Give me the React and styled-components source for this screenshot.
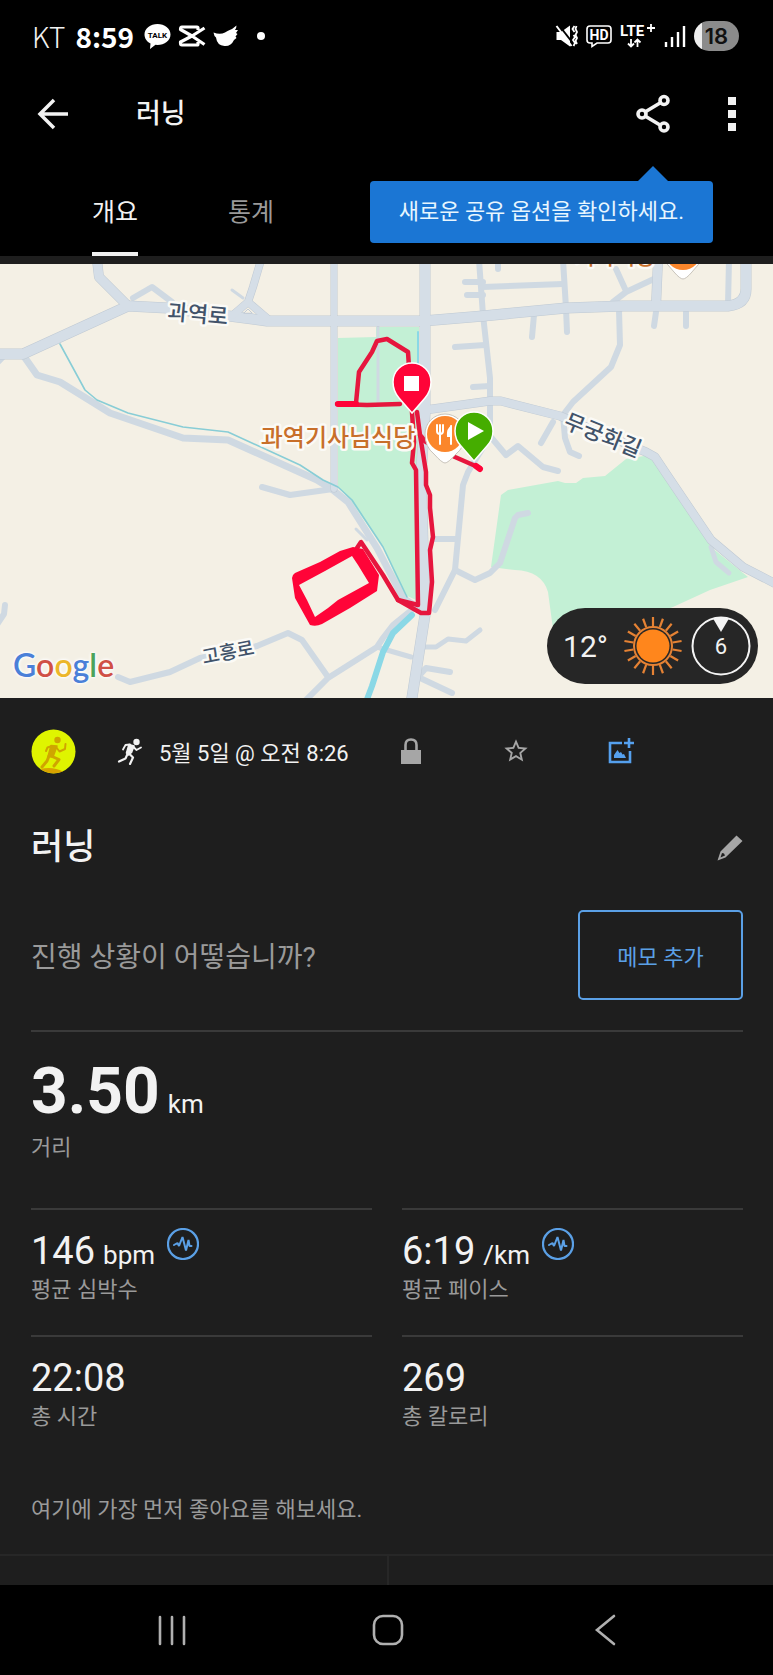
import React from "react";
import styled, { createGlobalStyle } from "styled-components";
import { MdStarBorder } from "react-icons/md";

const GlobalStyle = createGlobalStyle`
  * {
    box-sizing: border-box;
  }
  body {
    margin: 0;
    background-color: #000;
    color: #f2f2f2;
    font-family: Roboto, "Noto Sans CJK KR", sans-serif;
  }
  button {
    padding: 0;
    border: 0;
    background: none;
    color: inherit;
    font: inherit;
    cursor: pointer;
  }
  svg {
    display: block;
  }
  p, h1, h2 {
    margin: 0;
  }
`;

const mainRoads = [
  { d: "M-6 90H23L128 42L167 44L267 57H423L483 52L566 44L623 42H728Q746 40 746 25V-6", w: 10 },
  { d: "M97 -4L99 13L128 42", w: 9 },
  { d: "M261 -4L253 23L248 38L233 51M248 38L268 55", w: 7 },
  { d: "M425 -4V150L421 211L425 351L411 440", w: 10 },
  { d: "M334 -4V225", w: 6 },
  { d: "M658 -4L656 42", w: 9 },
  { d: "M425 146L490 137L501 137L560 152L646 188L655 193L665 208L711 276L743 303L776 320", w: 8 },
];

const sideRoads = [
  { d: "M23 91L37 111L60 118L110 149L183 174L228 176L317 216L333 226L348 238L377 284L403 334L418 344", w: 7 },
  { d: "M-4 100L4 92", w: 6 },
  { d: "M133 34L152 23L172 38", w: 6 },
  { d: "M232 26L243 34", w: 3 },
  { d: "M262 223L290 231L333 225", w: 6 },
  { d: "M356 265L367 276", w: 3 },
  { d: "M378 63V137", w: 3 },
  { d: "M479 -4L483 51L490 114V172L506 191L518 182L543 203L558 207", w: 6 },
  { d: "M490 172L468 208L463 221L455 306L435 346", w: 6 },
  { d: "M465 18H483M467 31H483M483 23L563 20M455 83L485 81M473 123L490 122M498 -4V5", w: 6 },
  { d: "M563 -4L566 44L567 68M534 51L532 73", w: 6 },
  { d: "M613 38L626 28L656 14M616 5L626 27", w: 6 },
  { d: "M656 48L654 62M686 48V62M729 -4L728 41", w: 6 },
  { d: "M619 46L620 81L611 103L573 138L563 151L565 174L570 188L579 192", w: 6 },
  { d: "M553 158L541 179", w: 6 },
  { d: "M711 283L716 298L729 309", w: 5 },
  { d: "M455 306L475 316L490 309L500 299L515 254L518 251L528 249M433 275H455", w: 6 },
  { d: "M423 383H436L448 375L466 377L480 366", w: 5 },
  { d: "M450 408L426 404L418 413L452 429", w: 6 },
  { d: "M380 384L411 393", w: 5 },
  { d: "M414 344L393 361L383 374L377 383L328 414L304 438", w: 6 },
  { d: "M118 413L130 418L170 408L200 394L257 382L288 369L302 376L328 413", w: 6 },
  { d: "M5 341L4 350L-4 362", w: 6 },
];

const MapDrawing = () => (
  <MapCanvas viewBox="0 0 773 434" preserveAspectRatio="xMidYMid slice" role="img" aria-label="지도">
    <path
      fill="#c3f0d5"
      d="M338 74L376 73V63H419V300L416 336L403 330L383 283L350 236L338 222ZM501 231L508 226L558 217L565 219L576 219L583 214L605 212L626 195L650 191L670 216L711 283L748 313L710 326L673 343L600 370L553 365L548 328Q542 307 515 306L491 303Z"
    />
    <g fill="none" strokeLinecap="round" strokeLinejoin="round">
      {sideRoads.map((road, index) => (
        <path key={index} d={road.d} stroke="#cfd9e2" strokeWidth={road.w} />
      ))}
      {mainRoads.map((road, index) => (
        <path key={index} d={road.d} stroke="#bfc9d3" strokeWidth={road.w + 1} />
      ))}
      {mainRoads.map((road, index) => (
        <path key={index} d={road.d} stroke="#d5dee7" strokeWidth={road.w} />
      ))}
      <path
        stroke="#88cdd6"
        strokeWidth="1.6"
        d="M60 80L85 126L97 136L128 149L183 163L228 168L300 201L323 216L338 223L352 236L383 283L407 333"
      />
      <path stroke="#8ad8e6" strokeWidth="2" d="M418 68V102" />
      <path stroke="#8ad8e6" strokeWidth="6" d="M412 351L393 369L383 388L372 422L366 438" />
      <path fill="#f4f0e5" stroke="#c2ccd6" strokeWidth="1" d="M244 49L248 45L252 49Z" />
    </g>

    <g fill="none" stroke="#e6163e" strokeLinecap="round" strokeLinejoin="round">
      <path
        strokeWidth="4.5"
        d="M337 140L356 139L359 108L372 88L377 77L387 75L408 88L412 148L414 178L412 199L416 206L418 341L398 336M337 140L367 141L400 140"
      />
      <path
        strokeWidth="4.5"
        d="M417 148L420 171L426 208V221L430 231V244L433 273L430 286L432 318L429 349H421L398 336L383 311L361 278L355 287M480 204L455 193L426 178L420 171"
      />
      <path
        fill="#ff0438"
        fillRule="evenodd"
        stroke="none"
        d="M292 314Q292 311 295 309L320 298L340 287L353 283L363 285L379 311L377 327L350 344L322 360Q316 363 310 361L295 334ZM299 321L307 336L315 353L328 344L338 336L369 319L358 301L352 292L325 307Z"
      />
      <path stroke="#ff0438" strokeWidth="6" d="M338 140L356 140M480 205L476 202" />
    </g>

    {/* restaurants */}
    <path fill="#fff" stroke="#c9c4bb" strokeWidth="1" d="M445 199Q442 199 434 190Q425 183 425 170A20 20 0 0 1 465 170Q465 183 456 190Q448 199 445 199Z" />
    <circle cx="445" cy="170" r="18" fill="#fb862b" />
    <path fill="none" stroke="#fff" strokeWidth="2" strokeLinecap="round" d="M437 161V167Q437 170 440 170Q443 170 443 167V161M440 161V180M451 162V180" />
    <path fill="#fff" d="M452 161Q446 164 447 173H452Z" />
    <path fill="#fff" stroke="#c9c4bb" strokeWidth="1" d="M683 15Q680 15 674 8L662 -6H704L692 8Q686 15 683 15Z" />
    <circle cx="683" cy="-12" r="18" fill="#fb862b" />

    {/* finish and start */}
    <path fill="#ff0438" stroke="#fff" strokeWidth="1.5" d="M412 149L399 134Q393 127 393 118A19 19 0 0 1 431 118Q431 127 425 134Z" />
    <path fill="#fff" d="M404 112H419V127H404Z" />
    <path fill="#45ad00" stroke="#fff" strokeWidth="1.5" d="M474 197L461 182Q455 176 455 167A19 19 0 0 1 493 167Q493 176 487 182Z" />
    <path fill="#fff" d="M468 158L484 167L468 176Z" />

    <MapLabel x="198" y="58" size={22} transform="rotate(5 198 50)">과역로</MapLabel>
    <MapLabel x="603" y="179" size={22} transform="rotate(22 603 171)">무궁화길</MapLabel>
    <MapLabel x="228" y="395" size={19} transform="rotate(-11 228 388)">고흥로</MapLabel>
    <MapLabel x="338" y="182" size={24} $place>과역기사님식당</MapLabel>
    <MapLabel x="615" y="0" size={22} $place>기사식당</MapLabel>
  </MapCanvas>
);

const RunnerIcon = () => (
  <svg width="26" height="27" viewBox="0 0 26 27" fill="none" stroke="#f2f2f2" strokeLinejoin="round" strokeLinecap="round">
    <circle cx="19.5" cy="4" r="3.2" fill="#f2f2f2" stroke="none" />
    <path fill="#f2f2f2" strokeWidth="1.6" d="M12 6.500L17 8L14.500 14.500L11.500 17L9.500 15Z" />
    <path strokeWidth="1.800" d="M13 6.500L8.500 7L6 11.500M16.500 9L19.500 12L24 9.500" />
    <path strokeWidth="2.200" d="M12.500 16L16 19.500L13 26M10.500 16L8.500 20.500L2 23.500" />
  </svg>
);

const AvatarPicture = () => (
  <svg width="45" height="45" viewBox="0 0 45 45" fill="none" stroke="#cfa500" strokeLinejoin="round" strokeLinecap="round">
    <circle cx="22.500" cy="22.500" r="22" fill="#dff400" stroke="none" />
    <path fill="#d9a200" stroke="none" d="M9 40Q22 37 32 42.500Q20 47 9 40Z" />
    <circle cx="26.500" cy="11" r="3.200" fill="#cfa500" stroke="none" />
    <path fill="#cfa500" strokeWidth="1.500" d="M20 16.500L26 17L22 28L17 27.500Z" />
    <path strokeWidth="2" d="M21 17L16.500 18.500L15 22M25 18L28.500 22.500L34 20L34.500 15" />
    <path strokeWidth="3" d="M20 27L28 30.500L23 37M18 27L16 32L11 38" />
  </svg>
);

const PulseIcon = () => (
  <svg width="32" height="32" viewBox="0 0 32 32" fill="none" stroke="#5ba0e6">
    <circle cx="16" cy="16" r="15" strokeWidth="2.200" />
    <path strokeWidth="2" strokeLinejoin="bevel" strokeLinecap="round" d="M7 17L10.500 15L12 18L15.500 9L19 22.500L21.500 12L22.500 18H24.500" />
  </svg>
);

const rays = Array.from({ length: 18 }, (_, index) => index * 20);

const Weather = () => (
  <WeatherPill>
    <Temperature>12°</Temperature>
    <svg width="60" height="60" viewBox="-30 -30 60 60" aria-label="맑음">
      <circle r="16.500" fill="#ff861c" />
      <circle r="19" fill="none" stroke="#e58234" strokeWidth="2" />
      {rays.map((angle) => (
        <path key={angle} d="M0 -20V-29" stroke="#e58234" strokeWidth="2.200" transform={`rotate(${angle})`} />
      ))}
    </svg>
    <Wind>
      <svg width="60" height="60" viewBox="-30 -30 60 60">
        <circle r="28.500" fill="none" stroke="#f4f4f4" strokeWidth="2" />
        <path d="M-8 -27.500Q0 -30 8 -27.500L0 -14Z" fill="#f4f4f4" />
      </svg>
      <span>6</span>
    </Wind>
  </WeatherPill>
);

const NotificationIcons = () => (
  <StatusGroup $gap={8}>
    <svg width="27" height="27" viewBox="0 0 27 27">
      <path fill="#fff" d="M13.500 1C20.500 1 26.500 5.500 26.500 11.500S20.500 22 13.500 22L11.500 21.800L6 26L6.500 20.500C3 18.800 0.500 15.500 0.500 11.500C0.500 5.500 6.500 1 13.500 1Z" />
      <text x="13.500" y="14.500" fontSize="8" fontWeight="700" textAnchor="middle" fill="#000">TALK</text>
    </svg>
    <svg width="26" height="22" viewBox="0 0 26 22" fill="none" stroke="#fff" strokeWidth="3.200" strokeLinejoin="round">
      <path d="M25.500 3L13 11L25.500 19.500M19 5V3Q19 2 18 2H3Q1.500 2 1.500 4.500L13 11L1.500 17V18Q1.500 20 3 20H18Q19 20 19 19V17" />
    </svg>
    <svg width="26" height="22" viewBox="0 0 26 22" fill="#fff">
      <path d="M0.500 7.500Q7 10 12 7.500Q14.500 5.500 19 4L23.500 0.500Q23.500 3 22 5H25L23 8L24.500 9L22.500 11.500L23.500 13L21 15Q18 21.500 11.500 21Q4 20.500 3 12.500Q1 11 0.500 7.500Z" />
    </svg>
    <Dot />
  </StatusGroup>
);

const SignalIcons = () => (
  <StatusGroup $gap={8}>
    <svg width="22" height="22" viewBox="0 0 22 22" fill="none" stroke="#fff">
      <path fill="#fff" stroke="none" d="M0.500 7H5L14 0.500V21.500L5 15H0.500Z" />
      <path stroke="#000" strokeWidth="2" d="M2 -1L16 17" />
      <path strokeWidth="2" d="M0.500 1L15.500 21" />
      <path strokeWidth="1.800" d="M18.500 1L16.500 4L18.500 7M17.500 10L19 12L17 15L19 18L17.500 21M20.500 1L19.500 4L21 7L19.500 10L21 13L19.500 16L21 19" />
    </svg>
    <svg width="26" height="24" viewBox="0 0 26 24" fill="none" stroke="#fff" strokeWidth="1.600">
      <path d="M4 2H22Q25 2 25 5V16Q25 19 22 19H11L6 22.500V19H4Q1 19 1 16V5Q1 2 4 2Z" />
      <text x="13" y="15.500" fontSize="14" fontWeight="700" textAnchor="middle" fill="#fff" stroke="none">HD</text>
    </svg>
    <svg width="36" height="26" viewBox="0 0 36 26" fill="none" stroke="#fff" strokeWidth="1.800">
      <text x="0" y="13" fontSize="15" fontWeight="700" fill="#fff" stroke="none">LTE</text>
      <path d="M27 5H35M31 1V9M11 16V23M8 20.500L11 23.500L14 20.500M17.500 24V17M14.500 19.500L17.500 16.500L20.500 19.500" />
    </svg>
    <svg width="22" height="24" viewBox="0 0 22 24" fill="none" stroke="#fff" strokeWidth="2.400">
      <path d="M2 18V23M8 13V23M14 8V23M20 2V23" />
    </svg>
    <Battery>18</Battery>
  </StatusGroup>
);

const stats = [
  { value: "146", unit: "bpm", label: "평균 심박수", chart: true },
  { value: "6:19", unit: "/km", label: "평균 페이스", chart: true },
  { value: "22:08", label: "총 시간" },
  { value: "269", label: "총 칼로리" },
];

const App = () => {
  return (
    <Page>
      <GlobalStyle />
      <StatusBar>
        <StatusGroup $gap={10}>
          <Carrier>KT</Carrier>
          <Clock>8:59</Clock>
          <NotificationIcons />
        </StatusGroup>
        <SignalIcons />
      </StatusBar>

      <Header>
        <AppBar>
          <button aria-label="뒤로">
            <svg width="32" height="32" viewBox="0 0 32 32" fill="none" stroke="#f2f2f2" strokeWidth="3.500">
              <path d="M31 16H4M17 2L3 16L17 30" />
            </svg>
          </button>
          <h1>러닝</h1>
          <BarActions>
            <button aria-label="공유">
              <svg width="36" height="40" viewBox="0 0 36 40" fill="none" stroke="#f2f2f2" strokeWidth="3.600">
                <path d="M10 18L25 9M10 22L25 31" />
                <circle cx="7" cy="20" r="4" />
                <circle cx="29" cy="6.500" r="4" />
                <circle cx="29" cy="33" r="4" />
              </svg>
            </button>
            <button aria-label="더보기">
              <svg width="8" height="34" viewBox="0 0 8 34" fill="#f2f2f2">
                <path d="M0 0H8V8H0ZM0 13H8V21H0ZM0 26H8V34H0Z" />
              </svg>
            </button>
          </BarActions>
        </AppBar>
        <Tabs>
          <Tab $active>개요</Tab>
          <Tab>통계</Tab>
        </Tabs>
        <Tooltip role="tooltip">새로운 공유 옵션을 확인하세요.</Tooltip>
      </Header>

      <MapArea>
        <MapDrawing />
        <Google>
          <Letter $color="#4a80d8">G</Letter>
          <Letter $color="#d05046">o</Letter>
          <Letter $color="#ecb62a">o</Letter>
          <Letter $color="#4a80d8">g</Letter>
          <Letter $color="#4aa35b">l</Letter>
          <Letter $color="#d05046">e</Letter>
        </Google>
        <Weather />
      </MapArea>

      <Content>
        <MetaRow>
          <AvatarPicture />
          <When>
            <RunnerIcon />
            <span>5월 5일 @ 오전 8:26</span>
          </When>
          <MetaActions>
            <button aria-label="비공개">
              <svg width="28" height="28" viewBox="0 0 28 28" fill="#a6a6a6">
                <path d="M4 13H24V27H4Z" />
                <path fill="none" stroke="#a6a6a6" strokeWidth="2.600" d="M8.500 13V8Q8.500 2.500 14 2.500T19.500 8V13" />
              </svg>
            </button>
            <button aria-label="즐겨찾기">
              <MdStarBorder size={28} color="#a6a6a6" />
            </button>
            <button aria-label="사진 추가">
              <svg width="28" height="28" viewBox="0 0 28 28" fill="none" stroke="#55a0ee" strokeWidth="2.600">
                <path d="M15 6H3V25H23V14M22 1V11M17 6H27" />
                <path fill="#55a0ee" stroke="none" d="M7 21V18L10.500 13L12.500 16L14 15L15.500 17.500L17 17L19 21Z" />
              </svg>
            </button>
          </MetaActions>
        </MetaRow>

        <TitleRow>
          <h2>러닝</h2>
          <button aria-label="이름 편집">
            <svg width="26" height="26" viewBox="0 0 26 26" fill="#a6a6a6">
              <path fillRule="evenodd" d="M19.500 0.500L25.500 6L8.500 22.500L0.500 25.500L3.500 16.500ZM5 18L3.500 22.500L8 20.500L7 18.500Z" />
            </svg>
          </button>
        </TitleRow>

        <NoteRow>
          <p>진행 상황이 어떻습니까?</p>
          <NoteButton>메모 추가</NoteButton>
        </NoteRow>

        <Distance>
          <Total>
            3.50<Unit>km</Unit>
          </Total>
          <Label>거리</Label>
        </Distance>

        <Stats>
          {stats.map((ele, index) => {
            return (
              <Stat key={index}>
                <Value>
                  {ele.value}
                  {ele.unit && <Unit>{ele.unit}</Unit>}
                  {ele.chart && (
                    <ChartButton aria-label={ele.label + " 차트"}>
                      <PulseIcon />
                    </ChartButton>
                  )}
                </Value>
                <Label>{ele.label}</Label>
              </Stat>
            );
          })}
        </Stats>

        <Hint>여기에 가장 먼저 좋아요를 해보세요.</Hint>
      </Content>
      <Reactions>
        <div />
        <div />
      </Reactions>

      <NavBar>
        <button aria-label="최근 앱">
          <svg width="32" height="32" viewBox="0 0 32 32" stroke="#b0b0b0" strokeWidth="2.600" strokeLinecap="round">
            <path d="M4 3V30M16 3V30M28 3V30" />
          </svg>
        </button>
        <button aria-label="홈">
          <svg width="32" height="32" viewBox="0 0 32 32" fill="none" stroke="#b0b0b0" strokeWidth="2.600">
            <rect x="2" y="2" width="28" height="28" rx="9" />
          </svg>
        </button>
        <button aria-label="이전">
          <svg width="32" height="32" viewBox="0 0 32 32" fill="none" stroke="#b0b0b0" strokeWidth="2.600" strokeLinecap="round">
            <path d="M25 2L8 16L25 30" />
          </svg>
        </button>
      </NavBar>
    </Page>
  );
};

export default App;

const Page = styled.div`
  display: flex;
  flex-direction: column;
  min-height: 100vh;
`;

const StatusBar = styled.div`
  display: flex;
  align-items: center;
  justify-content: space-between;
  height: 72px;
  padding: 0 34px 0 32px;
`;

const StatusGroup = styled.div`
  display: flex;
  align-items: center;
  gap: ${(props) => props.$gap}px;
  svg {
    overflow: visible;
  }
`;

const Carrier = styled.span`
  font-family: "Noto Sans CJK KR", sans-serif;
  font-weight: 300;
  font-size: 28px;
  line-height: 32px;
`;

const Clock = styled(Carrier)`
  color: #fff;
  font-weight: 700;
`;

const Dot = styled.i`
  width: 8px;
  height: 8px;
  margin-left: 10px;
  border-radius: 50%;
  background-color: #fff;
`;

const Battery = styled.span`
  width: 45px;
  height: 30px;
  border-radius: 15px;
  background: linear-gradient(to right, #eee 8px, #8b8b8b 8px);
  color: #111;
  font-family: Inter, sans-serif;
  font-size: 22px;
  font-weight: 600;
  line-height: 30px;
  text-align: center;
`;

const Header = styled.header`
  position: relative;
  border-bottom: 8px solid #1e1e1e;
`;

const AppBar = styled.div`
  display: flex;
  align-items: center;
  height: 84px;
  padding: 0 37px;
  h1 {
    margin-left: 67px;
    font-size: 27px;
    line-height: 32px;
    font-weight: 500;
  }
`;

const BarActions = styled.div`
  display: flex;
  align-items: center;
  gap: 57px;
  margin-left: auto;
`;

const Tabs = styled.nav`
  display: flex;
  gap: 90px;
  height: 100px;
  padding-left: 92px;
`;

const Tab = styled.button`
  && {
    padding-top: 12px;
    border-bottom: 4px solid ${(props) => (props.$active ? "#f2f2f2" : "transparent")};
    color: ${(props) => (props.$active ? "#f2f2f2" : "#9a9a9a")};
    font-size: 25px;
  }
`;

const Tooltip = styled.div`
  position: absolute;
  right: 60px;
  bottom: 13px;
  padding: 15px 29px;
  border-radius: 4px;
  background-color: #1b76d4;
  color: #e8f6ff;
  font-size: 22px;
  line-height: 32px;
  &::before {
    content: "";
    position: absolute;
    right: 45px;
    bottom: 100%;
    border: 15px solid transparent;
    border-top-width: 0;
    border-bottom-color: #1b76d4;
  }
`;

const MapArea = styled.section`
  position: relative;
  height: 434px;
  background-color: #f4f0e5;
`;

const MapCanvas = styled.svg`
  width: 100%;
  height: 100%;
`;

const MapLabel = styled.text.attrs((props) => ({ fontSize: props.size }))`
  fill: ${(props) => (props.$place ? "#c86f2a" : "#42536a")};
  stroke: #fbfaf6;
  stroke-width: 5px;
  stroke-linejoin: round;
  paint-order: stroke;
  text-anchor: middle;
  font-weight: 500;
`;

const Google = styled.div`
  position: absolute;
  left: 13px;
  bottom: 13px;
  font-family: Lato, sans-serif;
  font-size: 32px;
  line-height: 40px;
  font-weight: 600;
  text-shadow: 0 0 2px #fff, 0 0 3px #fff, 0 0 4px #fff;
`;

const Letter = styled.span`
  color: ${(props) => props.$color};
`;

const WeatherPill = styled.div`
  position: absolute;
  right: 15px;
  bottom: 14px;
  display: flex;
  align-items: center;
  gap: 8px;
  height: 76px;
  padding: 0 7px 0 16px;
  border-radius: 38px;
  background-color: #262626;
`;

const Temperature = styled.span`
  margin-right: 7px;
  font-size: 30px;
`;

const Wind = styled.div`
  display: grid;
  place-items: center;
  > * {
    grid-area: 1 / 1;
  }
  span {
    font-size: 22px;
  }
`;

const Content = styled.main`
  padding: 0 30px 0 31px;
  background-color: #1e1e1e;
`;

const MetaRow = styled.div`
  display: flex;
  align-items: center;
  height: 106px;
`;

const When = styled.div`
  display: flex;
  align-items: center;
  gap: 16px;
  margin-left: 41px;
  font-size: 22px;
`;

const MetaActions = styled.div`
  display: flex;
  align-items: center;
  gap: 77px;
  margin-left: 48px;
`;

const TitleRow = styled.div`
  display: flex;
  align-items: center;
  justify-content: space-between;
  height: 88px;
  h2 {
    font-size: 35px;
    line-height: 40px;
    font-weight: 500;
  }
`;

const NoteRow = styled.div`
  display: flex;
  align-items: center;
  justify-content: space-between;
  padding: 18px 0 30px;
  border-bottom: 2px solid #3a3a3a;
  color: #9a9a9a;
  font-size: 28px;
`;

const NoteButton = styled.button`
  && {
    width: 165px;
    height: 90px;
    border: 2px solid #5ba0e6;
    border-radius: 5px;
    color: #5ba0e6;
    font-size: 22px;
  }
`;

const Distance = styled.div`
  height: 176px;
  padding-top: 32px;
`;

const Total = styled.p`
  font-size: 64px;
  line-height: 56px;
  font-weight: 700;
`;

const Unit = styled.span`
  margin-left: 8px;
  font-size: 26px;
  font-weight: 400;
`;

const Label = styled.p`
  color: #9a9a9a;
  font-size: 22px;
  line-height: 32px;
`;

const Stats = styled.div`
  display: grid;
  grid-template-columns: 1fr 1fr;
  column-gap: 30px;
`;

const Stat = styled.div`
  height: 127px;
  padding-top: 18px;
  border-top: 2px solid #3a3a3a;
`;

const Value = styled.p`
  display: flex;
  align-items: baseline;
  height: 46px;
  font-size: 38px;
  line-height: 46px;
`;

const ChartButton = styled.button`
  align-self: flex-start;
  margin-left: 12px;
`;

const Hint = styled(Label)`
  padding: 32px 0 28px;
`;

const Reactions = styled.div`
  display: grid;
  grid-template-columns: 1fr 1fr;
  height: 31px;
  border-top: 2px solid #272727;
  background-color: #1e1e1e;
  div + div {
    border-left: 2px solid #272727;
  }
`;

const NavBar = styled.nav`
  display: grid;
  grid-template-columns: repeat(3, 1fr);
  justify-items: center;
  align-items: center;
  height: 90px;
  padding: 0 60px 0 64px;
`;
